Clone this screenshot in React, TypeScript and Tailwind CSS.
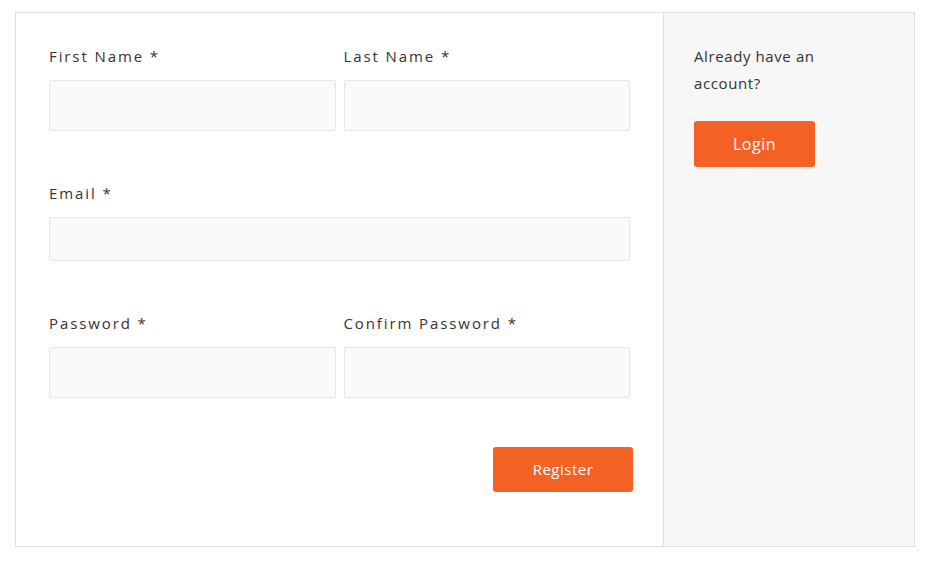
export default function App() {
  return (
    <div className="min-h-screen bg-white pt-3 px-[15px] font-['Open_Sans',sans-serif] text-[#333]">
      <div className="flex w-[900px] border border-[#dedede]">
        {/* Register form */}
        <form className="flex-1 pt-[33px] pb-[54px] pl-[33px] pr-[33px]">
          <div className="grid grid-cols-2 gap-x-2">
            <Field label="First Name *" h="h-[51px]" />
            <Field label="Last Name *" h="h-[51px]" />
          </div>
          <div className="mt-[52px]">
            <Field label="Email *" h="h-[44px]" />
          </div>
          <div className="mt-[52px] grid grid-cols-2 gap-x-2">
            <Field label="Password *" h="h-[51px]" type="password" />
            <Field label="Confirm Password *" h="h-[51px]" type="password" />
          </div>
          <div className="mt-[49px] flex justify-end -mr-[3px]">
            <button
              type="button"
              className="h-[45px] w-[140px] rounded-[3px] bg-[#f46125] text-[15px] tracking-[0.5px] text-white"
            >
              Register
            </button>
          </div>
        </form>

        {/* Login side */}
        <div className="w-[251px] border-l border-[#dedede] bg-[#f7f7f7] pl-[30px] pt-[30px]">
          <p className="w-[150px] text-[15px] leading-[27px] tracking-[0.6px] text-[#333]">Already have an account?</p>
          <button
            type="button"
            className="mt-6 h-[46px] w-[121px] rounded-[3px] bg-[#f46125] text-[16px] tracking-[0.5px] text-white"
          >
            Login
          </button>
        </div>
      </div>
    </div>
  )
}

function Field({ label, h, type = "text" }: { label: string; h: string; type?: string }) {
  return (
    <label className="block">
      <span className="block h-5 text-[15px] leading-5 tracking-[1.9px] text-[#333]">{label}</span>
      <input
        type={type}
        className={`mt-[14px] block w-full rounded-[2px] border border-[#e6e6e6] bg-[#fafafa] outline-none ${h}`}
      />
    </label>
  )
}
